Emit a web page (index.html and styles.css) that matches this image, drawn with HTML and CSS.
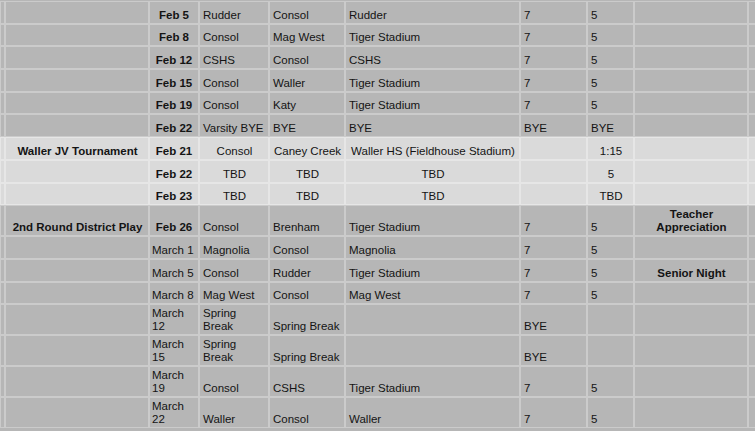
FILE: index.html
```html
<!DOCTYPE html>
<html>
<head>
<meta charset="utf-8">
<link rel="stylesheet" href="styles.css">
</head>
<body>
<table class="sched">
  <colgroup>
    <col class="c-edge"><col class="c-event"><col class="c-date"><col class="c-home"><col class="c-away"><col class="c-site"><col class="c-v"><col class="c-jv"><col class="c-note"><col class="c-tail">
  </colgroup>
  <tbody>
    <tr><td></td><td></td><td class="d">Feb 5</td><td>Rudder</td><td>Consol</td><td>Rudder</td><td>7</td><td>5</td><td></td><td></td></tr>
    <tr><td></td><td></td><td class="d">Feb 8</td><td>Consol</td><td>Mag West</td><td>Tiger Stadium</td><td>7</td><td>5</td><td></td><td></td></tr>
    <tr><td></td><td></td><td class="d">Feb 12</td><td>CSHS</td><td>Consol</td><td>CSHS</td><td>7</td><td>5</td><td></td><td></td></tr>
    <tr><td></td><td></td><td class="d">Feb 15</td><td>Consol</td><td>Waller</td><td>Tiger Stadium</td><td>7</td><td>5</td><td></td><td></td></tr>
    <tr><td></td><td></td><td class="d">Feb 19</td><td>Consol</td><td>Katy</td><td>Tiger Stadium</td><td>7</td><td>5</td><td></td><td></td></tr>
    <tr><td></td><td></td><td class="d">Feb 22</td><td>Varsity BYE</td><td>BYE</td><td>BYE</td><td>BYE</td><td>BYE</td><td></td><td></td></tr>
    <tr class="lt"><td></td><td class="b">Waller JV Tournament</td><td class="d">Feb 21</td><td>Consol</td><td>Caney Creek</td><td>Waller HS (Fieldhouse Stadium)</td><td></td><td>1:15</td><td></td><td></td></tr>
    <tr class="lt"><td></td><td></td><td class="d">Feb 22</td><td>TBD</td><td>TBD</td><td>TBD</td><td></td><td>5</td><td></td><td></td></tr>
    <tr class="lt"><td></td><td></td><td class="d">Feb 23</td><td>TBD</td><td>TBD</td><td>TBD</td><td></td><td>TBD</td><td></td><td></td></tr>
    <tr><td></td><td class="b">2nd Round District Play</td><td class="d">Feb 26</td><td>Consol</td><td>Brenham</td><td>Tiger Stadium</td><td>7</td><td>5</td><td class="b">Teacher Appreciation</td><td></td></tr>
    <tr><td></td><td></td><td class="m">March 1</td><td>Magnolia</td><td>Consol</td><td>Magnolia</td><td>7</td><td>5</td><td></td><td></td></tr>
    <tr><td></td><td></td><td class="m">March 5</td><td>Consol</td><td>Rudder</td><td>Tiger Stadium</td><td>7</td><td>5</td><td class="b">Senior Night</td><td></td></tr>
    <tr><td></td><td></td><td class="m">March 8</td><td>Mag West</td><td>Consol</td><td>Mag West</td><td>7</td><td>5</td><td></td><td></td></tr>
    <tr><td></td><td></td><td class="m">March 12</td><td>Spring Break</td><td>Spring Break</td><td></td><td>BYE</td><td></td><td></td><td></td></tr>
    <tr><td></td><td></td><td class="m">March 15</td><td>Spring Break</td><td>Spring Break</td><td></td><td>BYE</td><td></td><td></td><td></td></tr>
    <tr><td></td><td></td><td class="m">March 19</td><td>Consol</td><td>CSHS</td><td>Tiger Stadium</td><td>7</td><td>5</td><td></td><td></td></tr>
    <tr><td></td><td></td><td class="m">March 22</td><td>Waller</td><td>Consol</td><td>Waller</td><td>7</td><td>5</td><td></td><td></td></tr>
  </tbody>
</table>
</body>
</html>
```

FILE: styles.css
```css
html, body {
  margin: 0;
  padding: 0;
  background: #b6b6b6;
  overflow: hidden;
}
body {
  padding-top: 1px;
  width: 755px;
  height: 431px;
  box-sizing: border-box;
}
.sched {
  table-layout: fixed;
  border-collapse: separate;
  border-spacing: 0;
  width: 762px;
  font-family: "Liberation Sans", Arial, sans-serif;
  font-size: 11.5px;
  line-height: 13px;
  color: #141414;
}
.c-edge { width: 5px; }
.c-event { width: 144px; }
.c-date { width: 50px; }
.c-home { width: 70px; }
.c-away { width: 76px; }
.c-site { width: 175px; }
.c-v { width: 67px; }
.c-jv { width: 47px; }
.c-note { width: 114px; }
.c-tail { width: 14px; }
.sched tr { height: 22.7px; }
.sched td {
  background: #b6b6b6;
  border: 1px solid #cbcbcb;
  padding: 2px 2px 1px 3px;
  vertical-align: bottom;
  text-align: left;
  overflow: hidden;
}
.sched td:first-child { padding: 0; }
.sched td.d {
  font-weight: bold;
  text-align: center;
  padding-left: 2px;
  padding-right: 2px;
}
.sched td.m { padding-left: 2px; }
.sched td.b {
  font-weight: bold;
  text-align: center;
}
.sched tr.lt td {
  background: #dadada;
  border-color: #e6e6e6;
  text-align: center;
}
.sched tr.lt td.b { text-align: center; }
```
